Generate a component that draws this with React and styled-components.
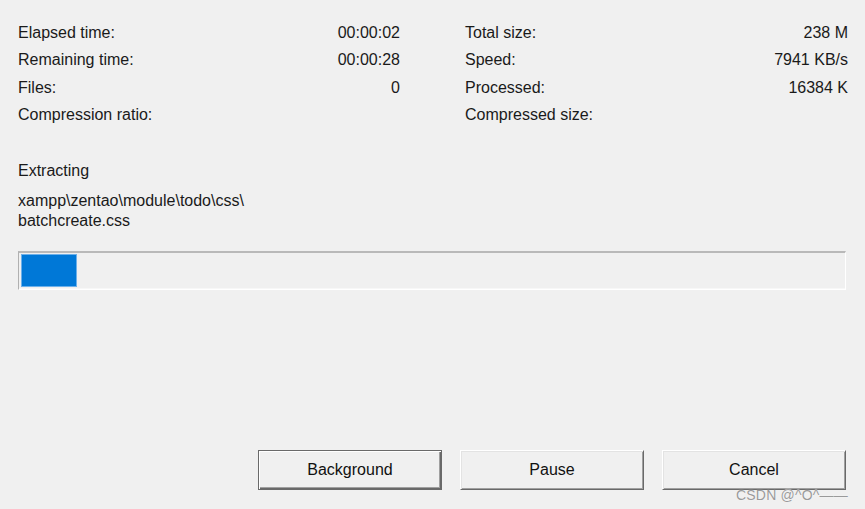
import React from "react";
import styled, { createGlobalStyle } from "styled-components";

const Global = createGlobalStyle`
  html, body { margin: 0; padding: 0; background: #f0f0f0; }
  body { font-family: "Liberation Sans", Arial, sans-serif; color: #1a1a1a; }
`;

const Window = styled.div`
  position: relative;
  width: 865px;
  height: 509px;
  box-sizing: border-box;
  padding: 19px 19px 19px 18px;
  background: #f0f0f0;
  display: flex;
  flex-direction: column;
  overflow: hidden;
  font-size: 16px;
`;

const Stats = styled.div`
  display: grid;
  grid-template-columns: 382px 383px;
  column-gap: 65px;
`;

const Column = styled.div`
  display: grid;
  grid-auto-rows: 27.5px;
`;

const Row = styled.div`
  display: flex;
  justify-content: space-between;
  align-items: center;
  line-height: 20px;
`;

const Label = styled.span``;
const Value = styled.span``;

const Status = styled.div`
  margin-top: 32px;
  line-height: 20px;
`;

const Path = styled.div`
  margin-top: 10px;
  line-height: 20px;
`;

const Bar = styled.div`
  margin-top: 20px;
  width: 828px;
  height: 39px;
  box-sizing: border-box;
  border-style: solid;
  border-width: 2px 1px 1px 1px;
  border-color: #b9b9b9 #ffffff #ffffff #b0b0b0;
  box-shadow: inset 0 -1px 0 #f7f7f7;
  padding: 1px 2px 2px 2px;
  background: #f0f0f0;
`;

const Fill = styled.div`
  height: 100%;
  box-sizing: border-box;
  background: #0078d7;
  border: 1px solid #6cb0ea;
`;

const Buttons = styled.div`
  margin-top: auto;
  display: flex;
  justify-content: flex-end;
  gap: 18px;
`;

const Button = styled.button`
  width: 184px;
  height: 40px;
  box-sizing: border-box;
  font-family: "Liberation Sans", Arial, sans-serif;
  font-size: 16px;
  color: #111;
  background: #f0f0f0;
  padding: 0;
  border-style: solid;
  border-width: 1px;
  border-color: ${(p) => (p.$default ? "#6a6a6a" : "#ffffff #696969 #696969 #ffffff")};
  box-shadow: ${(p) =>
    p.$default
      ? "inset 1px 1px 0 #ffffff, inset -1px -1px 0 #696969, inset -2px -2px 0 #a0a0a0"
      : "inset 1px 1px 0 #e3e3e3, inset -1px -1px 0 #a0a0a0"};
`;

const Watermark = styled.div`
  position: absolute;
  right: 17px;
  bottom: 6px;
  font-family: "Liberation Sans", Arial, sans-serif;
  font-size: 14px;
  color: #9a9a9a;
  letter-spacing: 0.2px;
  text-shadow: 0 0 1px #ffffff;
`;

const left = [
  ["Elapsed time:", "00:00:02"],
  ["Remaining time:", "00:00:28"],
  ["Files:", "0"],
  ["Compression ratio:", ""],
];
const right = [
  ["Total size:", "238 M"],
  ["Speed:", "7941 KB/s"],
  ["Processed:", "16384 K"],
  ["Compressed size:", ""],
];

export default function App() {
  const progress = 6.8;
  return (
    <>
      <Global />
      <Window>
        <Stats>
          {[left, right].map((col, i) => (
            <Column key={i}>
              {col.map(([l, v]) => (
                <Row key={l}>
                  <Label>{l}</Label>
                  <Value>{v}</Value>
                </Row>
              ))}
            </Column>
          ))}
        </Stats>
        <Status>Extracting</Status>
        <Path>
          xampp\zentao\module\todo\css\
          <br />
          batchcreate.css
        </Path>
        <Bar>
          <Fill style={{ width: `${progress}%` }} />
        </Bar>
        <Buttons>
          <Button $default>Background</Button>
          <Button>Pause</Button>
          <Button>Cancel</Button>
        </Buttons>
        <Watermark>CSDN @^O^——</Watermark>
      </Window>
    </>
  );
}
